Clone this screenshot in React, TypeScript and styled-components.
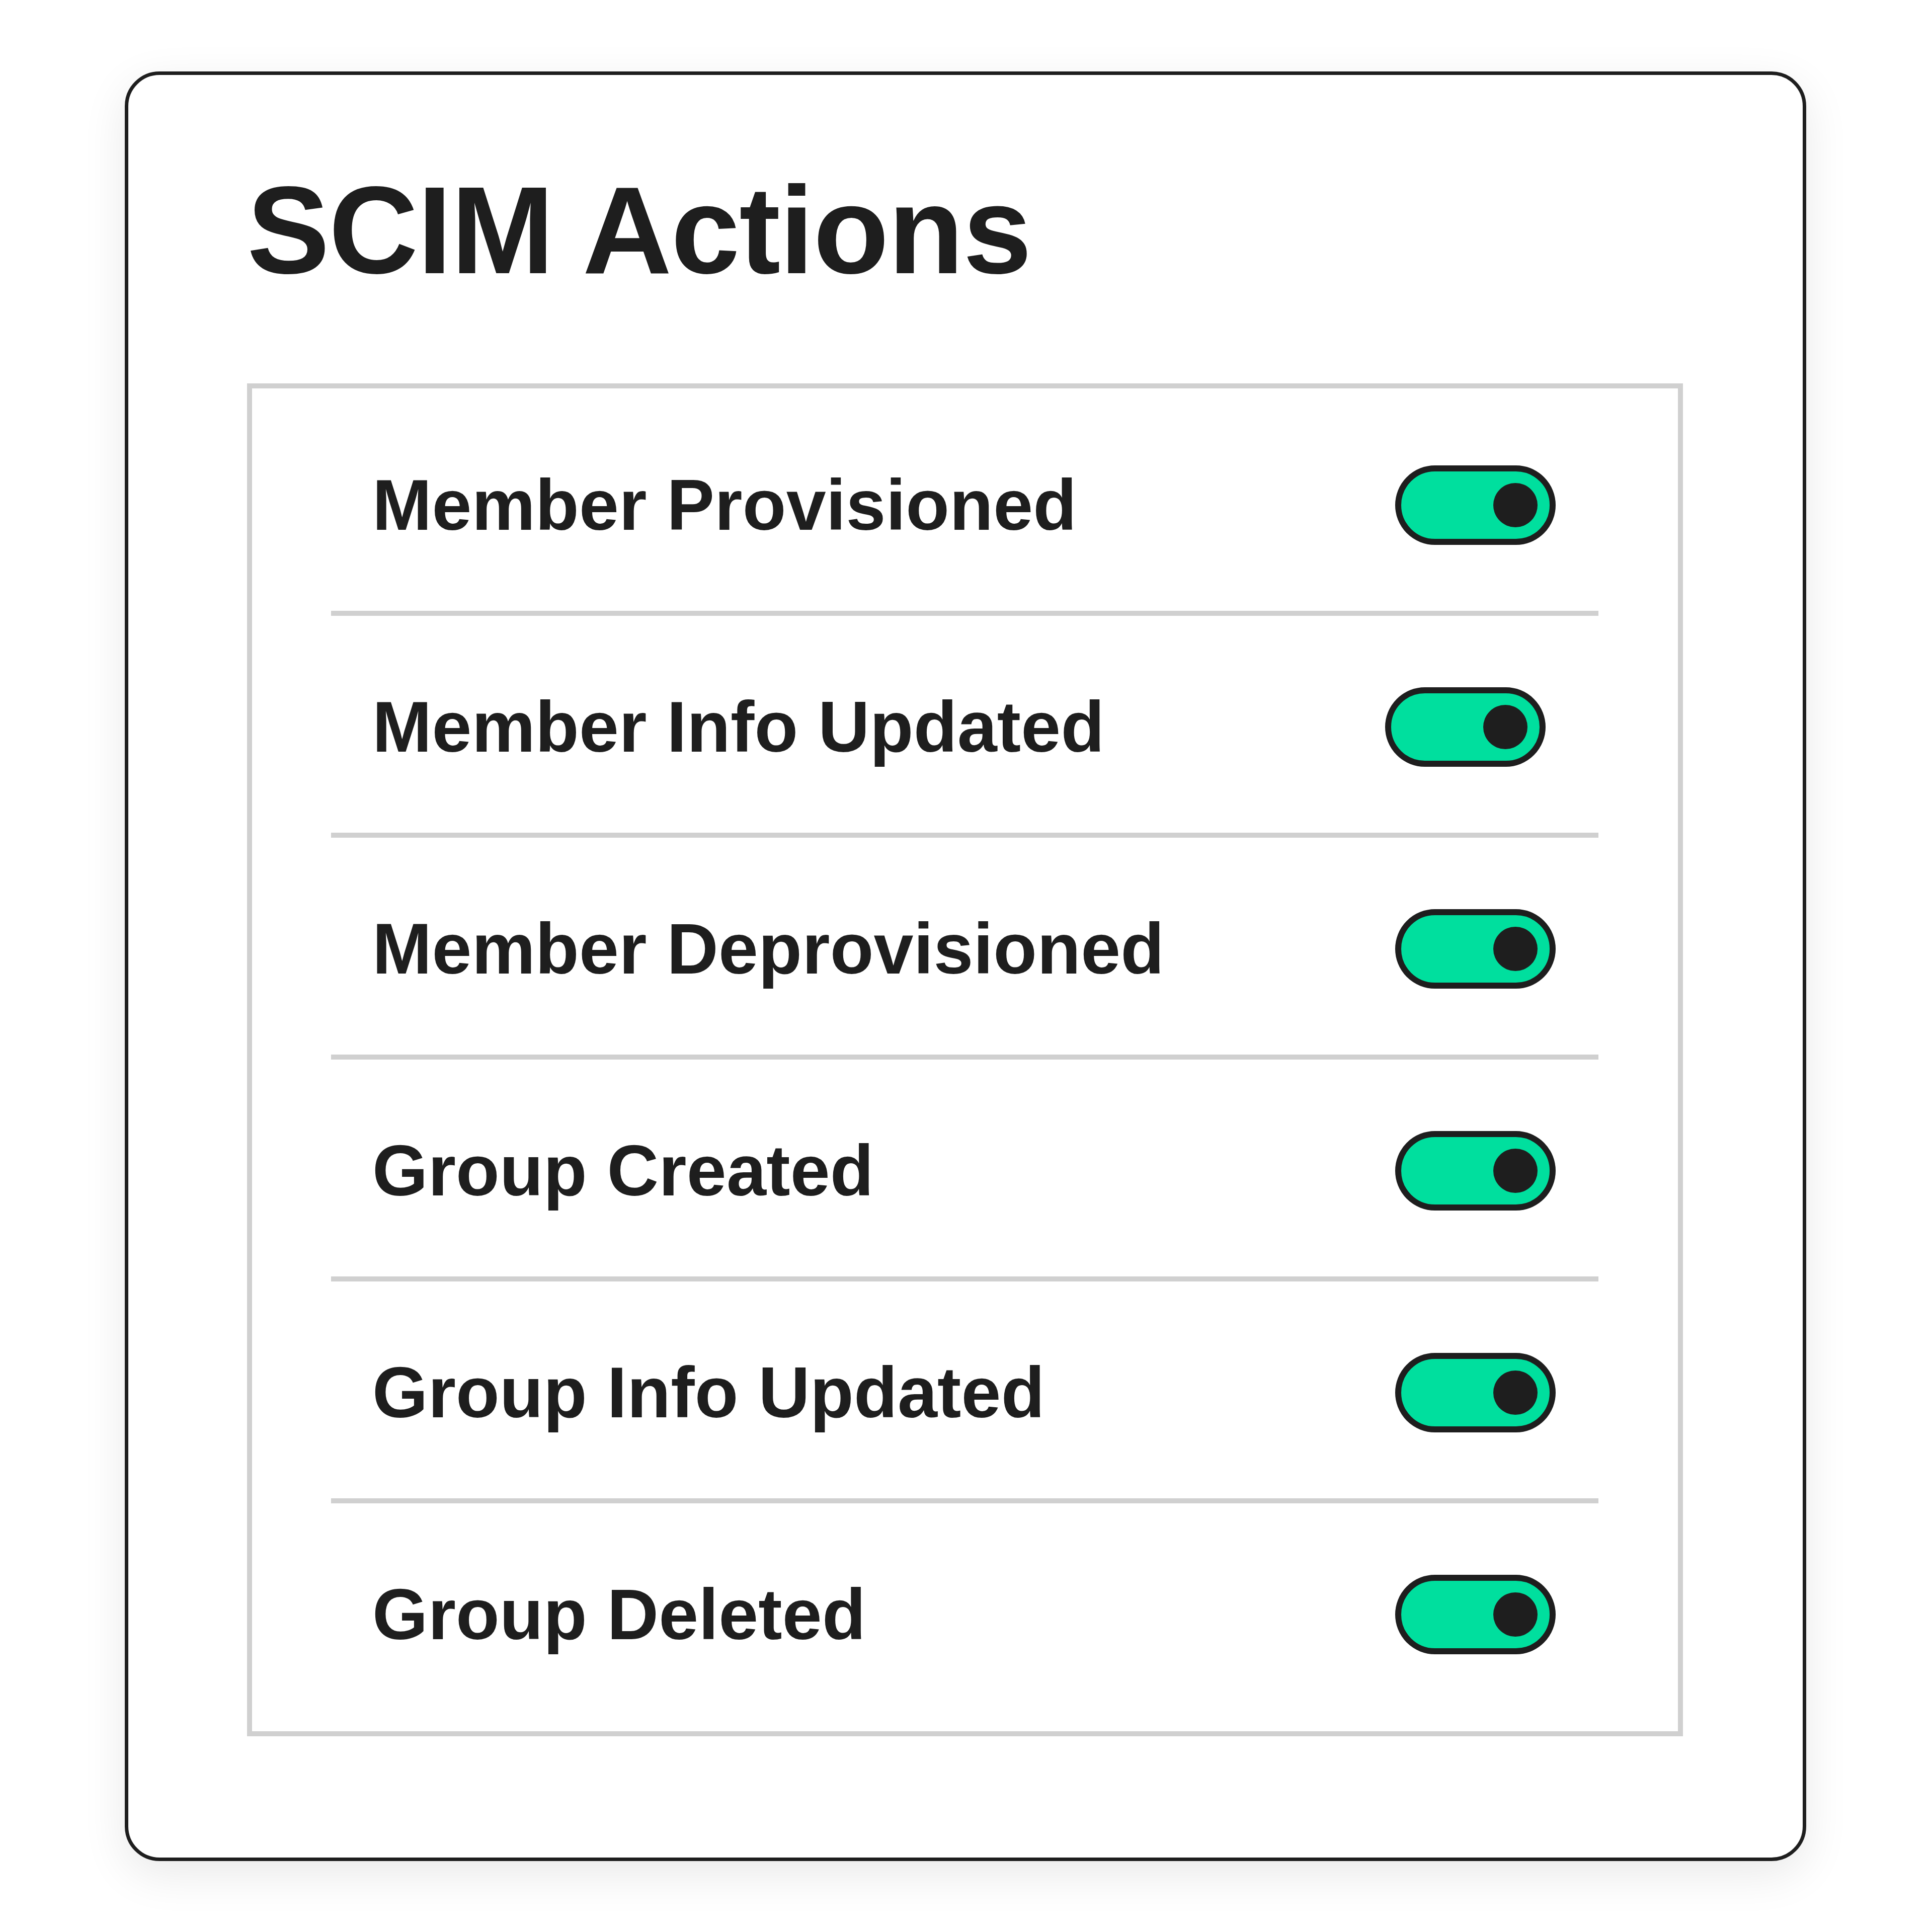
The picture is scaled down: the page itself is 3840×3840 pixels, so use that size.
import styled, { createGlobalStyle } from "styled-components";

const GlobalStyle = createGlobalStyle`
  html, body {
    margin: 0;
    padding: 0;
    background: #ffffff;
  }
  * {
    box-sizing: border-box;
  }
`;

const Page = styled.div`
  width: 3840px;
  height: 3840px;
  padding: 142px 0 0 248px;
  background: #ffffff;
  font-family: "Liberation Sans", Arial, sans-serif;
  color: #1e1e1e;
`;

const Card = styled.div`
  width: 3342px;
  height: 3557px;
  border: 7px solid #1e1e1e;
  border-radius: 69px;
  background: #ffffff;
  box-shadow: 0 26px 90px rgba(0, 0, 0, 0.09);
  padding: 186px 238px 0 236px;
  display: flex;
  flex-direction: column;
`;

const Title = styled.h1`
  margin: 0 0 181px 0;
  font-size: 246px;
  line-height: 1;
  font-weight: 700;
  letter-spacing: -1.5px;
`;

const List = styled.div`
  border: 10px solid #d0d0d0;
  padding: 11px 158px 22px 157px;
  display: flex;
  flex-direction: column;
`;

const Row = styled.div`
  height: 431px;
  padding: 11px 85px 0 82px;
  display: flex;
  align-items: center;
  justify-content: space-between;
`;

const Divider = styled.div`
  height: 10px;
  background: #d0d0d0;
`;

const Label = styled.span`
  font-size: 142px;
  line-height: 1;
  font-weight: 700;
  letter-spacing: 0.2px;
`;

const Toggle = styled.div<{ $nudge: number }>`
  width: 319px;
  height: 158px;
  margin-right: ${(p) => p.$nudge}px;
  border: 12px solid #1e1e1e;
  border-radius: 79px;
  background: #00df9e;
  display: flex;
  align-items: center;
  justify-content: flex-end;
  padding-right: 24px;
`;

const Knob = styled.div`
  width: 88px;
  height: 88px;
  border-radius: 50%;
  background: #1e1e1e;
`;

const actions = [
  { label: "Member Provisioned", nudge: 0 },
  { label: "Member Info Updated", nudge: 20 },
  { label: "Member Deprovisioned", nudge: 0 },
  { label: "Group Created", nudge: 0 },
  { label: "Group Info Updated", nudge: 0 },
  { label: "Group Deleted", nudge: 0 },
];

export default function App() {
  return (
    <>
      <GlobalStyle />
      <Page>
        <Card>
          <Title>SCIM Actions</Title>
          <List>
            {actions.map((a, i) => (
              <div key={a.label}>
                {i > 0 && <Divider />}
                <Row>
                  <Label>{a.label}</Label>
                  <Toggle $nudge={a.nudge}>
                    <Knob />
                  </Toggle>
                </Row>
              </div>
            ))}
          </List>
        </Card>
      </Page>
    </>
  );
}
